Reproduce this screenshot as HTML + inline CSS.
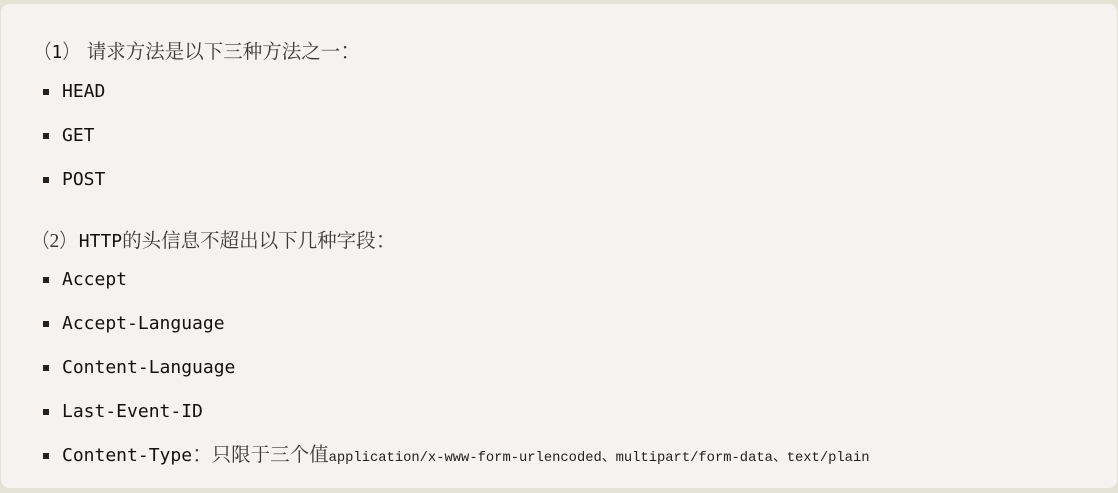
<!DOCTYPE html>
<html><head><meta charset="utf-8"><style>
body{margin:0;width:1118px;height:493px;background:#e4e2d5;overflow:hidden;position:relative}
.card{position:absolute;left:1px;top:4px;right:1px;bottom:5px;background:#f5f2ef;border-radius:8px}
.l{position:absolute;white-space:nowrap;line-height:24px}
.l span{line-height:20px}
.cn{font-family:"Liberation Serif","Noto Serif CJK SC","Noto Sans CJK SC",serif;color:#3a3a3a;font-size:19.5px}
.fw{font-family:"Noto Sans CJK SC","WenQuanYi Zen Hei",sans-serif;font-weight:300}
.m{font-family:"DejaVu Sans Mono","Liberation Mono",monospace;font-size:18px;color:#111}
.b{position:absolute;left:43px;width:6px;height:6px;background:#222}
.s{font-family:"Liberation Mono",monospace;font-size:13.8px;color:#222}
</style></head><body><div class="card"></div>
<div class="l cn" style="left:32px;top:40px"><span class="fw">（</span><span class="m">1</span><span class="fw">）</span> 请求方法是以下三种方法之一<span class="fw">：</span></div>
<div class="b" style="top:89px"></div><div class="l m" style="left:62px;top:80px">HEAD</div>
<div class="b" style="top:133px"></div><div class="l m" style="left:62px;top:124px">GET</div>
<div class="b" style="top:177px"></div><div class="l m" style="left:62px;top:168px">POST</div>
<div class="l cn" style="left:30px;top:229px"><span class="fw">（</span>2<span class="fw">）</span><span class="m">HTTP</span>的头信息不超出以下几种字段<span class="fw">：</span></div>
<div class="b" style="top:277px"></div><div class="l m" style="left:62px;top:268px">Accept</div>
<div class="b" style="top:321px"></div><div class="l m" style="left:62px;top:312px">Accept-Language</div>
<div class="b" style="top:365px"></div><div class="l m" style="left:62px;top:356px">Content-Language</div>
<div class="b" style="top:409px"></div><div class="l m" style="left:62px;top:400px">Last-Event-ID</div>
<div class="b" style="top:453px"></div><div class="l m" style="left:62px;top:443px">Content-Type<span class="cn"><span class="fw">：</span>只限于三个值</span><span class="s">application/x-www-form-urlencoded、multipart/form-data、text/plain</span></div>
</body></html>
